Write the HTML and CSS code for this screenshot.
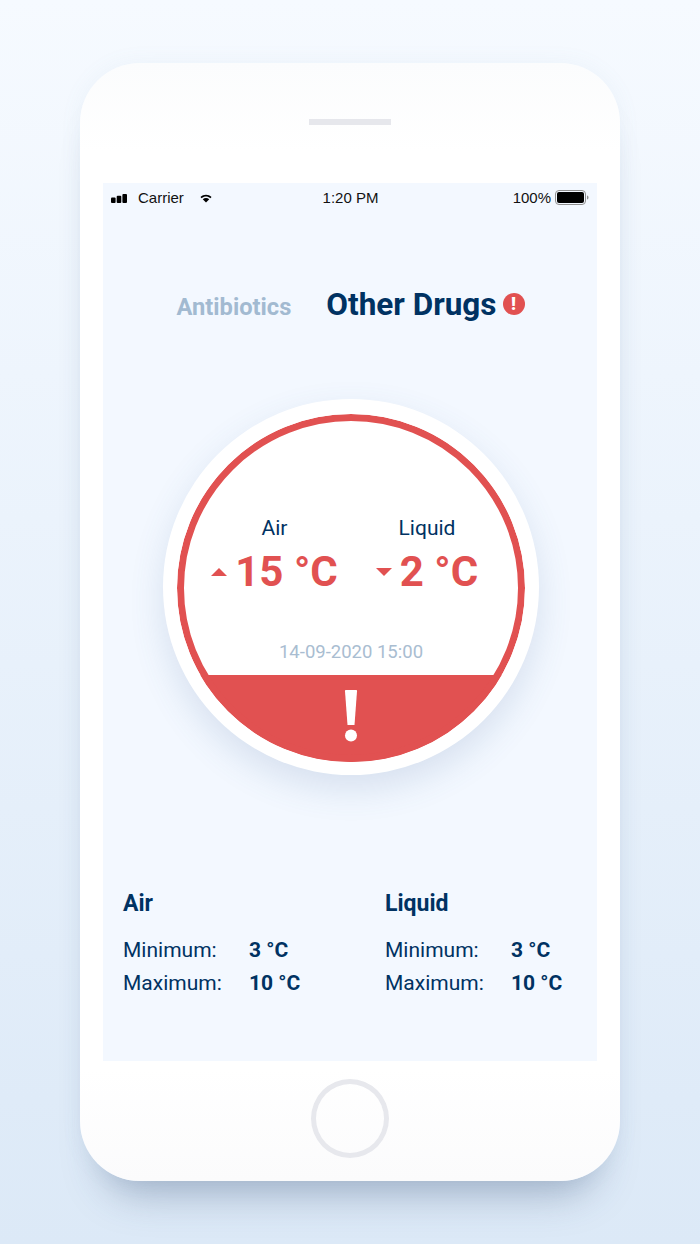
FILE: index.html
```html
<!DOCTYPE html>
<html lang="en">
<head>
<meta charset="utf-8">
<title>Drug storage temperature</title>
<link rel="stylesheet" href="styles.css">
</head>
<body>
<main class="phone">
  <div class="speaker"></div>
  <section class="screen">
    <div class="status">
      <div class="status-left">
        <svg class="signal" width="16" height="9" viewBox="0 0 16 9"><rect x="0" y="3.500" width="4.600" height="5.500" rx="1"/><rect x="5.700" y="1.800" width="4.600" height="7.200" rx="1"/><rect x="11.400" y="0" width="4.600" height="9" rx="1"/></svg>
        <span class="carrier">Carrier</span>
        <svg class="wifi" width="12" height="9" viewBox="0 0 13 9"><path d="M.5 2.800C3.800-.2 9.200-.2 12.500 2.800L11.200 4.100C8.500 1.800 4.500 1.800 1.800 4.100Z"/><path d="M3 5.300C5 3.600 8 3.600 10 5.300L6.500 8.800Z"/></svg>
      </div>
      <span class="time">1:20 PM</span>
      <div class="status-right">
        <span>100%</span>
        <svg class="battery" width="34" height="15" viewBox="0 0 34 15"><rect x=".5" y=".5" width="30" height="14" rx="3.500" fill="none" stroke="#8f8f8f"/><rect x="2" y="2" width="27" height="11" rx="2" fill="#000"/><path d="M32 5.500c1 .3 1.500 .8 1.500 2S33 9.200 32 9.500Z" fill="#8f8f8f"/></svg>
      </div>
    </div>

    <nav class="tabs">
      <span class="tab">Antibiotics</span>
      <span class="tab tab-active">Other Drugs</span>
      <span class="tab-alert">!</span>
    </nav>

    <div class="gauge">
      <div class="ring">
        <div class="readings">
          <div class="reading">
            <div class="reading-label">Air</div>
            <div class="reading-value"><span class="arrow arrow-up"></span>15 °C</div>
          </div>
          <div class="reading reading-liquid">
            <div class="reading-label">Liquid</div>
            <div class="reading-value"><span class="arrow arrow-down"></span>2 °C</div>
          </div>
        </div>
        <div class="stamp">14-09-2020 15:00</div>
        <div class="band">
          <svg class="bang" width="14" height="52" viewBox="0 0 14 52"><path d="M2 0H12C12.800 0 13 .5 13 1.200L10.500 35H3.500L1 1.200C1 .5 1.200 0 2 0Z"/><circle cx="7" cy="45.500" r="6"/></svg>
        </div>
      </div>
    </div>

    <div class="limits">
      <div class="limit">
        <h2>Air</h2>
        <div class="limit-row"><span class="limit-key">Minimum:</span><b>3 °C</b></div>
        <div class="limit-row"><span class="limit-key">Maximum:</span><b>10 °C</b></div>
      </div>
      <div class="limit">
        <h2>Liquid</h2>
        <div class="limit-row"><span class="limit-key">Minimum:</span><b>3 °C</b></div>
        <div class="limit-row"><span class="limit-key">Maximum:</span><b>10 °C</b></div>
      </div>
    </div>
  </section>
  <div class="home"></div>
</main>
</body>
</html>
```

FILE: styles.css
```css
* { box-sizing: border-box; }

html, body { margin: 0; height: 1244px; overflow: hidden; }

body {
  background: linear-gradient(180deg, #f6faff 0%, #eef5fd 30%, #dce9f7 100%);
  font-family: Roboto, "Liberation Sans", sans-serif;
  color: #003262;
}

.phone {
  width: 540px;
  height: 1118px;
  margin: 63px auto 0;
  padding: 0 23px;
  border-radius: 60px;
  background: linear-gradient(180deg, #fbfcfd 0%, #ffffff 8%, #ffffff 90%, #fbfbfc 100%);
  box-shadow: 0 36px 40px -24px rgba(50, 75, 115, .36), 0 0 22px rgba(120, 150, 190, .07);
  display: flex;
  flex-direction: column;
  align-items: center;
}

.speaker {
  width: 82px;
  height: 6px;
  margin-top: 56px;
  background: #e6e7ec;
}

.screen {
  width: 494px;
  height: 878px;
  margin-top: 58px;
  background: #f3f8ff;
  display: flex;
  flex-direction: column;
  align-items: center;
}

.status {
  width: 100%;
  height: 28px;
  padding: 0 8px;
  display: grid;
  grid-template-columns: 1fr auto 1fr;
  align-items: center;
  font-family: "Liberation Sans", Arial, sans-serif;
  font-size: 15px;
  color: #111;
}

.status-left { display: flex; align-items: center; }
.signal { margin: 2px 11px 0 0; }
.wifi { margin: 3px 0 0 16px; }
.signal, .wifi { fill: #000; }
.time { margin-left: 1px; }
.status-right { display: flex; align-items: center; justify-content: flex-end; gap: 4px; }

.tabs {
  display: flex;
  align-items: center;
  height: 40px;
  margin-top: 73px;
  margin-left: 1px;
}

.tab {
  font-size: 23.700px;
  font-weight: 700;
  color: #a2bad1;
  margin-top: 6px;
}

.tab-active {
  font-size: 31.500px;
  color: #003262;
  margin: 0 0 0 35px;
}

.tab-alert {
  width: 22px;
  height: 22px;
  margin-left: 6px;
  border-radius: 50%;
  background: #e15151;
  color: #fff;
  font-size: 18px;
  font-weight: 900;
  line-height: 22px;
  text-align: center;
}

.gauge {
  width: 376px;
  height: 376px;
  margin: 75px 0 0 2px;
  padding: 15px 14px 13px;
  border-radius: 50%;
  background: #fff;
  box-shadow: 0 14px 34px rgba(70, 105, 155, .16);
}

.ring {
  position: relative;
  width: 348px;
  height: 348px;
  border-radius: 50%;
  overflow: hidden;
  display: flex;
  flex-direction: column;
  align-items: center;
}

.ring::after {
  content: "";
  position: absolute;
  inset: 0;
  border: 7.500px solid #e15151;
  border-radius: 50%;
}

.readings {
  display: flex;
  width: 100%;
  margin-top: 102px;
  padding-left: 15px;
}

.reading { width: 165px; text-align: center; }
.reading-liquid { width: 110px; margin-left: 15px; }

.reading-label { font-size: 21px; line-height: 25px; }

.reading-value {
  display: flex;
  align-items: center;
  justify-content: center;
  white-space: nowrap;
  font-size: 42px;
  font-weight: 700;
  line-height: 50px;
  margin-top: 6px;
  color: #e15151;
}

.arrow {
  width: 0;
  height: 0;
  margin-right: 8px;
  border-left: 8px solid transparent;
  border-right: 8px solid transparent;
}
.arrow-up { border-bottom: 8px solid #e15151; }
.arrow-down { border-top: 8px solid #e15151; }

.stamp {
  margin-top: 43px;
  font-size: 18.500px;
  line-height: 24px;
  color: #a9bdd1;
}

.band {
  width: 100%;
  flex: 1;
  margin-top: 11px;
  padding-top: 15px;
  background: #e15151;
  display: flex;
  justify-content: center;
  align-items: flex-start;
}

.bang { fill: #fff; }

.limits {
  width: 100%;
  margin-top: 115px;
  padding-left: 20px;
  display: flex;
}

.limit { flex: 0 0 262px; }

.limit h2 {
  margin: 0 0 17px;
  font-size: 23px;
  line-height: 27px;
  font-weight: 700;
}

.limit-row {
  display: flex;
  font-size: 21px;
  line-height: 33px;
}

.limit-key { width: 126px; }
.limit-row b { font-weight: 700; }

.home {
  width: 78px;
  height: 79px;
  margin-top: 18px;
  border: 5px solid #e7e8ed;
  border-radius: 50%;
}
```
